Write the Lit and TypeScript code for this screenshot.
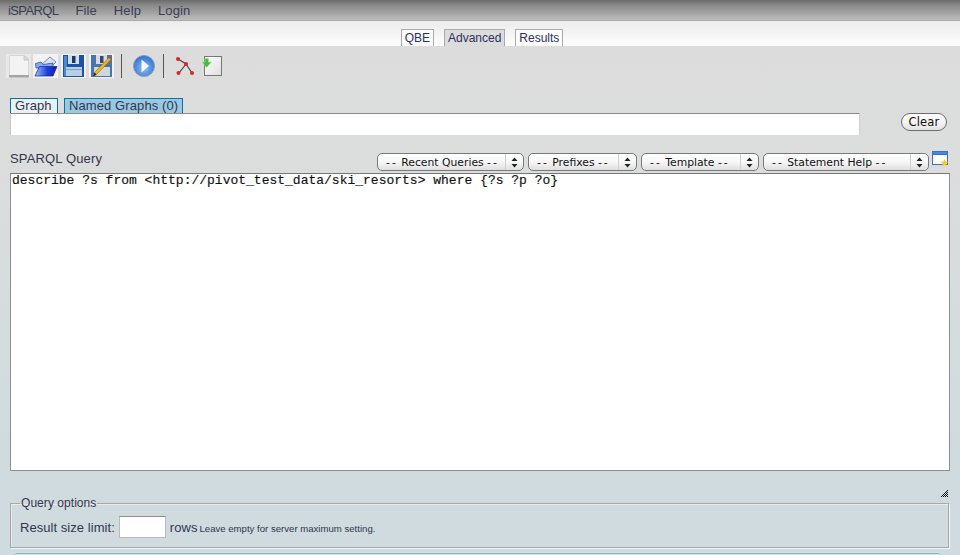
import { LitElement, html, css, svg } from "lit";
import { customElement } from "lit/decorators.js";

const icons = {
  doc: svg`<svg width="25" height="24" viewBox="0 0 25 24"><rect width="25" height="24" fill="#e8e8e8"/><path d="M3.500 1.500H18L22.500 6V22.500H3.500Z" fill="#f3f3f3" stroke="#d6d6d6"/><path d="M18 1.500V6H22.500Z" fill="#dcdcdc" stroke="#c8c8c8"/><rect x="3" y="21" width="20" height="2.500" fill="#a4a4a4"/></svg>`,
  open: svg`<svg width="25" height="24" viewBox="0 0 25 24"><rect width="25" height="24" fill="#f2f2f2"/><path d="M8 11L17 3L23 8L19 12Z" fill="#dfe3fa" stroke="#5a64c8" stroke-width=".8"/><path d="M2.500 9.500L8 8L10 10.500L20 9V14H3Z" fill="#8aa6ec" stroke="#2a3fb0" stroke-width=".7"/><defs><linearGradient id="f" x1="0" y1="0" x2="1" y2="0"><stop offset="0" stop-color="#9fc4f8"/><stop offset=".55" stop-color="#1f3fe0"/><stop offset="1" stop-color="#0e1fa0"/></linearGradient></defs><path d="M6.500 12.500H24L20 22H2Z" fill="url(#f)" stroke="#101f90" stroke-width=".7"/></svg>`,
  save: svg`<svg width="25" height="24" viewBox="0 0 25 24"><rect width="25" height="24" fill="#f2f2f2"/><rect x="2" y="1" width="21" height="22" fill="#1d52a4"/><rect x="3" y="2" width="3" height="20" fill="#4b8ad0"/><rect x="7" y="1" width="11" height="9" fill="#d6dce6"/><rect x="11" y="2" width="3.500" height="7" fill="#18386e"/><rect x="5" y="13" width="16" height="9" fill="#b7d0e8"/><rect x="5" y="15" width="16" height="1" fill="#7ea2c8"/></svg>`,
  saveas: svg`<svg width="25" height="24" viewBox="0 0 25 24"><rect width="25" height="24" fill="#f2f2f2"/><rect x="2" y="1" width="21" height="22" fill="#4a74ac"/><rect x="7" y="1" width="11" height="9" fill="#d6dce6"/><rect x="11" y="2" width="3.500" height="7" fill="#3a4a66"/><rect x="5" y="13" width="16" height="9" fill="#cfd6de"/><path d="M4 22.500L5.500 18.500L20 3.500L22 5.500L7.500 20.500Z" fill="#f2b418" stroke="#8a5a10" stroke-width=".5"/><path d="M20 3.500L22 5.500L23 2.500Z" fill="#d83a2a"/><path d="M4 22.500L5.500 18.500L7.500 20.500Z" fill="#222"/></svg>`,
  run: svg`<svg width="24" height="24" viewBox="0 0 24 24"><defs><radialGradient id="g" cx=".5" cy=".6" r=".6"><stop offset="0" stop-color="#8fc0f4"/><stop offset="1" stop-color="#2b6fd2"/></radialGradient></defs><circle cx="12" cy="12" r="10.500" fill="url(#g)" stroke="#8a9ab4" stroke-width="1"/><path d="M9.500 5.500L17 12L9.500 18.500Z" fill="#fff"/></svg>`,
  graph: svg`<svg width="20" height="20" viewBox="0 0 20 20"><path d="M3 3L11 8L4 17M11 8L17 17" fill="none" stroke="#444" stroke-width="1.200"/><g fill="#e0202a"><circle cx="3" cy="3" r="2"/><circle cx="11" cy="8" r="2"/><circle cx="3.500" cy="17" r="2"/><circle cx="17" cy="17" r="2"/></g></svg>`,
  load: svg`<svg width="21" height="20" viewBox="0 0 21 20"><defs><linearGradient id="l" x1="0" y1="0" x2="1" y2="1"><stop offset="0" stop-color="#fff"/><stop offset="1" stop-color="#dedede"/></linearGradient></defs><rect x="3.500" y=".5" width="17" height="19" fill="url(#l)" stroke="#777"/><path d="M4 2.500H7.500V6H10.500L5.500 11.500L1 6H4Z" fill="#3cc02e" stroke="#a8e49c" stroke-width=".7"/></svg>`,
  win: svg`<svg width="17" height="16" viewBox="0 0 17 16"><rect x=".5" y=".5" width="15" height="13" fill="#fff" stroke="#3a6ed0"/><rect x=".5" y=".5" width="15" height="3" fill="#4a86e0" stroke="#3a6ed0"/><path d="M12.500 8L13.500 10.500L16.500 10.800L14.300 12.500L15 15.500L12.500 14L10 15.500L10.700 12.500L8.500 10.800L11.500 10.500Z" fill="#f6c81e"/></svg>`,
  grip: svg`<svg width="9" height="9" viewBox="0 0 9 9" shape-rendering="crispEdges"><defs><pattern id="d" width="2" height="2" patternUnits="userSpaceOnUse"><rect width="1" height="1" fill="#111"/><rect x="1" y="1" width="1" height="1" fill="#111"/></pattern></defs><path d="M9 0V9H0Z" fill="url(#d)"/></svg>`,
};

@customElement("app-root")
export class AppRoot extends LitElement {
  static styles = css`
    :host { display: block; width: 960px; height: 555px; overflow: hidden; font-family: "Liberation Sans", Arial, sans-serif; color: #33364e; background: linear-gradient(#dcdcdc 46px, #dcdddd 150px, #cfdbdf 500px); }
    .menu { height: 20px; display: flex; align-items: center; padding-left: 8px; gap: 17px; font-size: 13px; letter-spacing: .1px; color: #3a3c56; background: linear-gradient(#6c6c6c, #8c8c8c 30%, #bdbdbd); border-bottom: 1px solid #a9a9a9; }
    .brand { letter-spacing: -.6px; }
    .tabsbar { height: 25px; display: flex; justify-content: center; align-items: flex-end; gap: 10px; background: linear-gradient(#ececec, #fdfdfd); padding-left: 4px; box-sizing: border-box; }
    .tab { height: 17px; box-sizing: border-box; border: 1px solid #aaa; border-bottom: 0; background: #fbfbfb; font-size: 12px; line-height: 16px; padding: 0 3px; color: #2f3160; }
    .tab.active { background: #dcdcdc; }
    .toolbar { height: 40px; display: flex; align-items: center; padding: 0 0 0 6px; box-sizing: border-box; }
    .toolbar svg { display: block; flex: none; }
    .t { margin-right: 3px; }
    .t.first { margin-right: 2px; }
    .sep { width: 1px; height: 24px; background: #555; flex: none; }
    .sep.a { margin: 0 10px 0 4px; }
    .sep.b { margin: 0 11px 0 7px; }
    .gicon { margin-right: 6px; }
    .graphs { margin: 12px 0 0 10px; display: flex; gap: 6px; height: 15px; }
    .gt { box-sizing: border-box; height: 15px; border: 1px solid #0a70a8; border-bottom: 0; font-size: 13px; line-height: 14px; padding: 0 3px 0 4px; letter-spacing: .1px; background: #e8f2f4; white-space: nowrap; }
    .gt.first { width: 48px; }
    .gt.on { background: #99c9e2; width: 119px; }
    .graphrow { display: flex; align-items: flex-start; padding-left: 10px; }
    .ginput { box-sizing: border-box; width: 850px; height: 22px; border: 0; border-top: 1px solid #8a8a8a; border-left: 1px solid #c8c8c8; border-right: 1px solid #d0d0d0; background: #fff; padding: 0; outline: none; display: block; }
    .clear { margin-left: 41px; width: 46px; height: 18px; box-sizing: border-box; border: 1px solid #6c6c6c; border-radius: 9px; background: linear-gradient(#fff, #f4f4f4 50%, #e2e2e2); font: 11.500px "DejaVu Sans", sans-serif; color: #111; text-align: center; line-height: 16px; letter-spacing: .2px; }
    .qhead { display: flex; align-items: flex-start; height: 38px; padding-left: 10px; box-sizing: border-box; }
    .qlabel { font-size: 13px; width: 367px; margin-top: 16px; line-height: 16px; flex: none; letter-spacing: .15px; }
    .selects { display: flex; gap: 4px; margin-top: 18px; }
    .sel { box-sizing: border-box; height: 18px; display: flex; align-items: center; border: 1px solid #7a7a7a; border-radius: 5px; background: linear-gradient(#fff, #f6f6f6 50%, #dfdfdf); font: 10.800px "DejaVu Sans", sans-serif; color: #111; }
    .sel .lbl { flex: 1; padding-left: 8px; white-space: pre; }
    .sel .d { letter-spacing: 2px; }
    .sel .arr { width: 17px; height: 16px; border-left: 1px solid #d0d0d0; display: flex; align-items: center; justify-content: center; flex: none; }
    .win { margin: 16px 0 0 3px; flex: none; }
    .editor { display: block; box-sizing: border-box; margin-left: 10px; width: 940px; height: 298px; border: 1px solid #8e8e8e; border-top-color: #777; background: #fff; padding: 0 1px; resize: none; outline: none; font: 13px/14px "Liberation Mono", monospace; color: #111; -webkit-text-stroke: .15px #111; }
    .grip { height: 26px; display: flex; justify-content: flex-end; align-items: flex-end; padding: 0 12px 0 0; box-sizing: border-box; }
    .grip svg { display: block; }
    fieldset { margin: 0 11px 0 10px; padding: 0 0 0 9px; height: 51px; box-sizing: border-box; border: 1px solid #a8a8a8; box-shadow: 1px 1px 0 #f0f4f4, inset 1px 1px 0 #e6ecec; min-width: 0; }
    legend { font-size: 12px; color: #33364e; padding: 0 1px; line-height: 12px; letter-spacing: .05px; }
    .opts { display: flex; align-items: center; height: 24px; font-size: 13px; margin-top: 6px; letter-spacing: .05px; }
    .limit { box-sizing: border-box; width: 47px; height: 22px; margin: 0 4px 0 4px; border: 1px solid #bbb; border-top-color: #8a8a8a; background: #fff; padding: 0; outline: none; }
    .hint { font-size: 9.600px; margin-left: 2px; padding-top: 2px; letter-spacing: 0; }
    .bottom { height: 6px; margin: 4px 15px 0 10px; border: 1px solid #b8eef0; border-bottom: 0; border-radius: 8px 8px 0 0; background: #d6e4e8; box-shadow: inset 0 1px 0 #a0a8aa; }
  `;

  arrows() {
    return html`<span class="arr"><svg width="7" height="11" viewBox="0 0 7 11"><path d="M3.500 0.500L6.500 4H.5ZM3.500 10.500L6.500 7H.5Z" fill="#222"/></svg></span>`;
  }

  render() {
    const sels: [string, number][] = [
      ["Recent Queries", 147],
      ["Prefixes", 109],
      ["Template", 118],
      ["Statement Help", 166],
    ];
    return html`
      <div class="menu"><span class="brand">iSPARQL</span><span>File</span><span>Help</span><span>Login</span></div>
      <div class="tabsbar">
        <div class="tab">QBE</div><div class="tab active">Advanced</div><div class="tab">Results</div>
      </div>
      <div class="toolbar">
        <span class="t first">${icons.doc}</span><span class="t">${icons.open}</span><span class="t">${icons.save}</span><span class="t">${icons.saveas}</span>
        <span class="sep a"></span>
        <span>${icons.run}</span>
        <span class="sep b"></span>
        <span class="gicon">${icons.graph}</span>
        <span>${icons.load}</span>
      </div>
      <div class="graphs"><div class="gt first">Graph</div><div class="gt on">Named Graphs (0)</div></div>
      <div class="graphrow"><input class="ginput" /><div class="clear">Clear</div></div>
      <div class="qhead">
        <div class="qlabel">SPARQL Query</div>
        <div class="selects">
          ${sels.map(([t, w]) => html`<div class="sel" style="width:${w}px"><span class="lbl"><span class="d">--</span> ${t} <span class="d">--</span></span>${this.arrows()}</div>`)}
        </div>
        <span class="win">${icons.win}</span>
      </div>
      <textarea class="editor" .value=${"describe ?s from <http://pivot_test_data/ski_resorts> where {?s ?p ?o}"}></textarea>
      <div class="grip">${icons.grip}</div>
      <fieldset>
        <legend>Query options</legend>
        <div class="opts">Result size limit: <input class="limit" /> rows <span class="hint">Leave empty for server maximum setting.</span></div>
      </fieldset>
      <div class="bottom"></div>
    `;
  }
}
